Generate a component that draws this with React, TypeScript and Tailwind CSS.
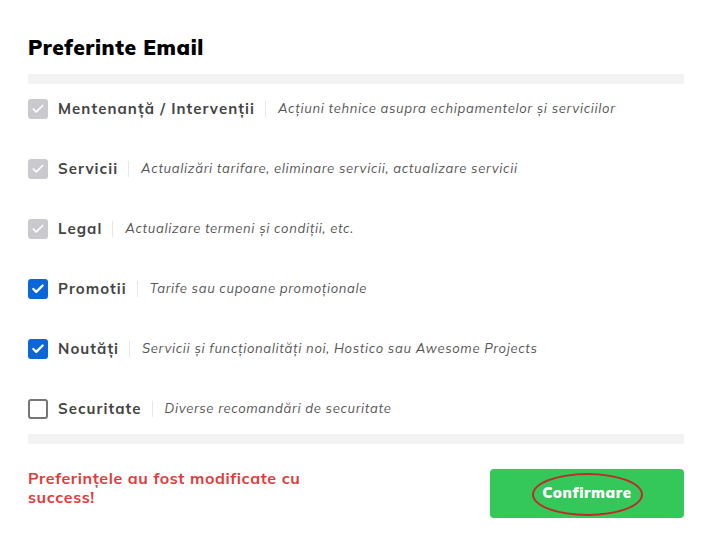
import { Check } from 'lucide-react';

type Pref = {
  label: string;
  desc: string;
  state: 'locked' | 'on' | 'off';
};

const prefs: Pref[] = [
  { label: 'Mentenanță / Intervenții', desc: 'Acțiuni tehnice asupra echipamentelor și serviciilor', state: 'locked' },
  { label: 'Servicii', desc: 'Actualizări tarifare, eliminare servicii, actualizare servicii', state: 'locked' },
  { label: 'Legal', desc: 'Actualizare termeni și condiții, etc.', state: 'locked' },
  { label: 'Promotii', desc: 'Tarife sau cupoane promoționale', state: 'on' },
  { label: 'Noutăți', desc: 'Servicii și funcționalități noi, Hostico sau Awesome Projects', state: 'on' },
  { label: 'Securitate', desc: 'Diverse recomandări de securitate', state: 'off' },
];

function Box({ state }: { state: Pref['state'] }) {
  if (state === 'off') {
    return <span className="w-5 h-5 shrink-0 rounded-[3px] border-2 border-[#767676] bg-white" />;
  }
  return (
    <span
      className={
        state === 'on'
          ? 'w-5 h-5 shrink-0 rounded-[3px] bg-[#0b67d9] flex items-center justify-center'
          : 'w-5 h-5 shrink-0 rounded-[3px] bg-[#c9c9ce] flex items-center justify-center'
      }
    >
      <Check className="w-[14px] h-[14px] text-white" strokeWidth={state === 'on' ? 4 : 3} />
    </span>
  );
}

export default function App() {
  return (
    <div className="w-[712px] h-[554px] bg-white px-7 pt-[34px] font-['Mulish','Nunito',sans-serif]">
      <h1 className="text-[21px] leading-[26px] font-black text-black tracking-[0.6px]">Preferinte Email</h1>

      <div className="mt-[14px] h-[10px] bg-[#f3f3f3]" />

      <div className="flex flex-col pt-[5px]">
        {prefs.map((p) => (
          <div key={p.label} className="flex items-center h-[60px] pb-[20px] last:h-[45px] last:pb-[5px]">
            <Box state={p.state} />
            <span className="ml-[10px] text-[15px] font-bold text-[#444] tracking-[1.05px] whitespace-nowrap">
              {p.label}
            </span>
            <span className="ml-[10px] mr-[12px] w-px h-[16px] bg-[#e6e6e6]" />
            <span className="text-[13px] italic text-[#555] tracking-[0.67px] whitespace-nowrap">{p.desc}</span>
          </div>
        ))}
      </div>

      <div className="h-[10px] bg-[#f3f3f3]" />

      <div className="flex items-start justify-between mt-[25px]">
        <p className="w-[300px] text-[16px] leading-[19px] font-bold text-[#e03b3b] tracking-[0.6px]">
          Preferințele au fost modificate cu success!
        </p>
        <div className="relative">
          <button className="w-[194px] h-[49px] rounded-[4px] bg-[#34c759] text-white text-[15px] font-black tracking-[0.6px]">
            Confirmare
          </button>
          <span className="absolute left-[42px] top-[4px] w-[111px] h-[43px] rounded-[50%] border-2 border-[#c4272b] pointer-events-none" />
        </div>
      </div>
    </div>
  );
}
